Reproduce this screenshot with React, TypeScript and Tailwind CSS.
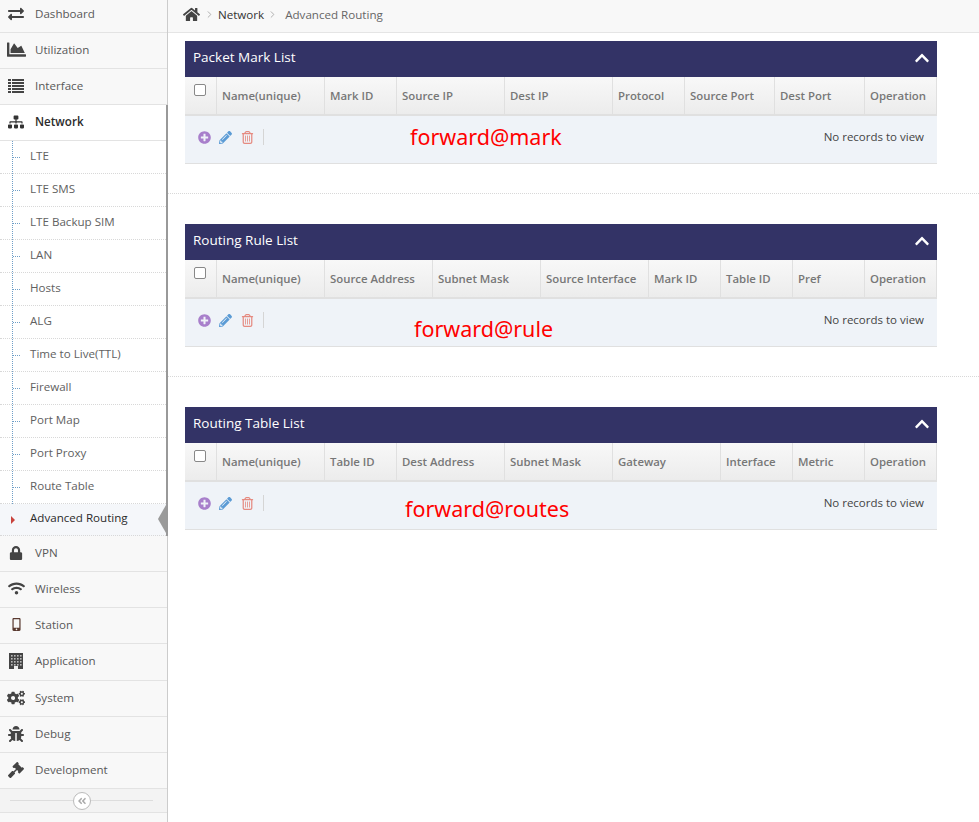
import type { ReactNode } from 'react';
import { FaAngleDoubleLeft, FaBug, FaChartArea, FaChevronUp, FaCogs, FaExchangeAlt, FaGavel, FaHome, FaLock, FaMobileAlt, FaPencilAlt, FaPlusCircle, FaSitemap, FaWifi } from 'react-icons/fa';
import { FaRegTrashCan } from 'react-icons/fa6';
import { FiChevronRight } from 'react-icons/fi';

const subItems = ['LTE', 'LTE SMS', 'LTE Backup SIM', 'LAN', 'Hosts', 'ALG', 'Time to Live(TTL)', 'Firewall', 'Port Map', 'Port Proxy', 'Route Table'];

function ListIcon() {
  return (
    <svg width="16" height="14" viewBox="0 0 16 14" fill="currentColor">
      {[0, 3, 6, 9, 12].map((y) => (
        <g key={y}>
          <rect x="0" y={y} width="3" height="2" />
          <rect x="4" y={y} width="12" height="2" />
        </g>
      ))}
    </svg>
  );
}

function BuildingIcon() {
  return (
    <svg width="14" height="16" viewBox="0 0 14 16">
      <rect width="14" height="16" fill="#444" />
      {[2, 5, 8, 11].map((y) =>
        [2, 5, 8, 11].map((x) => <rect key={`${x}-${y}`} x={x} y={y} width="1.6" height="1.6" fill="#bbb" />)
      )}
      <rect x="5" y="13" width="4" height="3" fill="#eee" />
    </svg>
  );
}

function NavRow({ icon, label, className = 'h-9 pb-[2px]' }: { icon: ReactNode; label: string; className?: string }) {
  return (
    <div className={`flex items-center border-b border-[#e3e3e3] text-[#585858] ${className}`}>
      <span className="flex w-[32px] justify-center text-[16px] text-[#444]">{icon}</span>
      <span className="ml-[3px]">{label}</span>
    </div>
  );
}

function SubRow({ label, active }: { label: string; active?: boolean }) {
  return (
    <div className={`relative flex items-center border-b border-dotted border-[#d8d8d8] pl-[30px] ${active ? 'h-[32px] bg-[#f5f7fa] pb-[3px] text-[#2b2b2b]' : 'h-[33px] pb-[2px] text-[#616161]'}`}>
      {active ? (
        <span className="absolute left-[11px] top-[12px] h-0 w-0 border-y-[4px] border-l-[4px] border-y-transparent border-l-[#c9433c]" />
      ) : (
        <span className="absolute left-[13px] top-[16px] w-[7px] border-t border-dotted border-[#6f9fc8]" />
      )}
      {label}
      {active && (
        <span className="absolute right-0 top-[1px] h-0 w-0 border-y-[14px] border-r-[8px] border-y-transparent border-r-[#9a9a9a]" />
      )}
    </div>
  );
}

function Sidebar() {
  return (
    <aside className="w-[168px] shrink-0 border-r border-[#cccccc] bg-[#f8f8f8] text-[11.6px]">
      <NavRow icon={<FaExchangeAlt />} label="Dashboard" className="h-[33px] pb-[4px]" />
      <NavRow icon={<FaChartArea className="text-[19px]" />} label="Utilization" />
      <NavRow icon={<ListIcon />} label="Interface" />
      <div className="mr-[-1px] border-r-[2px] border-[#999999]">
        <div className="flex h-9 items-center border-b border-[#e3e3e3] bg-white pb-[2px] font-semibold text-[#2b2b2b]">
          <span className="flex w-[32px] justify-center text-[16px] text-[#333]"><FaSitemap /></span>
          <span className="ml-[3px]">Network</span>
        </div>
        <div className="relative bg-white">
          <span className="absolute bottom-0 left-[12px] top-0 border-l border-dotted border-[#6f9fc8]" />
          {subItems.map((s) => <SubRow key={s} label={s} />)}
          <SubRow label="Advanced Routing" active />
        </div>
      </div>
      <NavRow icon={<FaLock className="text-[14px]" />} label="VPN" />
      <NavRow icon={<FaWifi className="text-[17px]" />} label="Wireless" />
      <NavRow icon={<FaMobileAlt className="text-[13px] text-[#5a3a30]" />} label="Station" />
      <NavRow icon={<BuildingIcon />} label="Application" className="h-[37px] pb-[2px]" />
      <NavRow icon={<FaCogs className="text-[18px]" />} label="System" />
      <NavRow icon={<FaBug />} label="Debug" />
      <NavRow icon={<FaGavel />} label="Development" />
      <div className="flex h-[24px] items-center border-b border-[#e3e3e3] bg-[#f3f3f3] pl-[10px] pr-[14px]">
        <span className="flex-1 border-t border-[#dddddd]" />
        <span className="flex h-[18px] w-[18px] items-center justify-center rounded-full border border-[#bbbbbb] bg-white text-[10px] text-[#aaaaaa]"><FaAngleDoubleLeft /></span>
        <span className="flex-1 border-t border-[#dddddd]" />
      </div>
    </aside>
  );
}

function Breadcrumb() {
  return (
    <div className="flex h-[33px] items-center gap-[3px] border-b border-[#e5e5e5] bg-[#f8f8f8] pb-[3px] pl-[15px] text-[11.6px]">
      <FaHome className="text-[17px] text-[#444]" />
      <FiChevronRight className="ml-[1px] text-[11px] text-[#aaaaaa]" />
      <span className="text-[#333]">Network</span>
      <FiChevronRight className="text-[11px] text-[#aaaaaa]" />
      <span className="ml-[4px] text-[#666]">Advanced Routing</span>
    </div>
  );
}

function Panel({ title, columns, grid, note, noteClass }: { title: string; columns: string[]; grid: string; note: string; noteClass: string }) {
  return (
    <section className="relative w-[752px]">
      <div className="flex h-9 items-center justify-between bg-[#333366] pb-[3px] pl-[8px] pr-[7px] text-[13.5px] text-white">
        <span>{title}</span>
        <FaChevronUp className="text-[16px]" />
      </div>
      <div className={`grid h-[39px] border-b-[2px] border-[#e0e0e0] bg-gradient-to-b from-[#f8f8f8] to-[#ececec] text-[11.4px] font-semibold text-[#777] ${grid}`}>
        <div className="border-r border-[#e0e0e0] pl-[9px] pt-[7px]">
          <span className="block h-[12px] w-[12px] rounded-[2px] border border-[#888] bg-white" />
        </div>
        {columns.map((c) => (
          <div key={c} className="flex items-center border-r border-[#e0e0e0] pl-[5px]">{c}</div>
        ))}
      </div>
      <div className="flex h-[48px] items-start justify-between border-b border-[#e0e0e0] bg-[#eff3f8] pr-[13px] pt-[13px]">
        <div className="flex h-[16px] items-center pl-[13px] text-[13px]">
          <FaPlusCircle className="text-[#a87fcb]" />
          <FaPencilAlt className="ml-[8px] text-[#5b9bd5]" />
          <FaRegTrashCan className="ml-[9px] text-[#e58a80]" />
          <span className="ml-[9px] h-[16px] border-l border-[#d5d5d5]" />
        </div>
        <span className="text-[11.5px] leading-[16px] text-[#444]">No records to view</span>
      </div>
      <span className={`absolute font-['Noto_Sans',sans-serif] text-[21.5px] leading-none text-[#ff0000] ${noteClass}`}>{note}</span>
    </section>
  );
}

export default function App() {
  return (
    <div className="flex h-[822px] w-[979px] overflow-hidden bg-white font-['Open_Sans',sans-serif]">
      <Sidebar />
      <main className="flex-1">
        <Breadcrumb />
        <div className="flex flex-col pt-[8px]">
          <div className="ml-[17px]">
            <Panel title="Packet Mark List" note="forward@mark" noteClass="left-[225px] top-[85px]"
              grid="grid-cols-[32px_108px_72px_108px_108px_72px_90px_90px_72px]"
              columns={['Name(unique)', 'Mark ID', 'Source IP', 'Dest IP', 'Protocol', 'Source Port', 'Dest Port', 'Operation']} />
          </div>
          <div className="mb-[30px] mt-[29px] border-t border-dotted border-[#d8d8d8]" />
          <div className="ml-[17px]">
            <Panel title="Routing Rule List" note="forward@rule" noteClass="left-[229px] top-[94px]"
              grid="grid-cols-[32px_108px_108px_108px_108px_72px_72px_72px_72px]"
              columns={['Name(unique)', 'Source Address', 'Subnet Mask', 'Source Interface', 'Mark ID', 'Table ID', 'Pref', 'Operation']} />
          </div>
          <div className="mb-[30px] mt-[29px] border-t border-dotted border-[#d8d8d8]" />
          <div className="ml-[17px]">
            <Panel title="Routing Table List" note="forward@routes" noteClass="left-[220px] top-[91px]"
              grid="grid-cols-[32px_108px_72px_108px_108px_108px_72px_72px_72px]"
              columns={['Name(unique)', 'Table ID', 'Dest Address', 'Subnet Mask', 'Gateway', 'Interface', 'Metric', 'Operation']} />
          </div>
        </div>
      </main>
    </div>
  );
}
